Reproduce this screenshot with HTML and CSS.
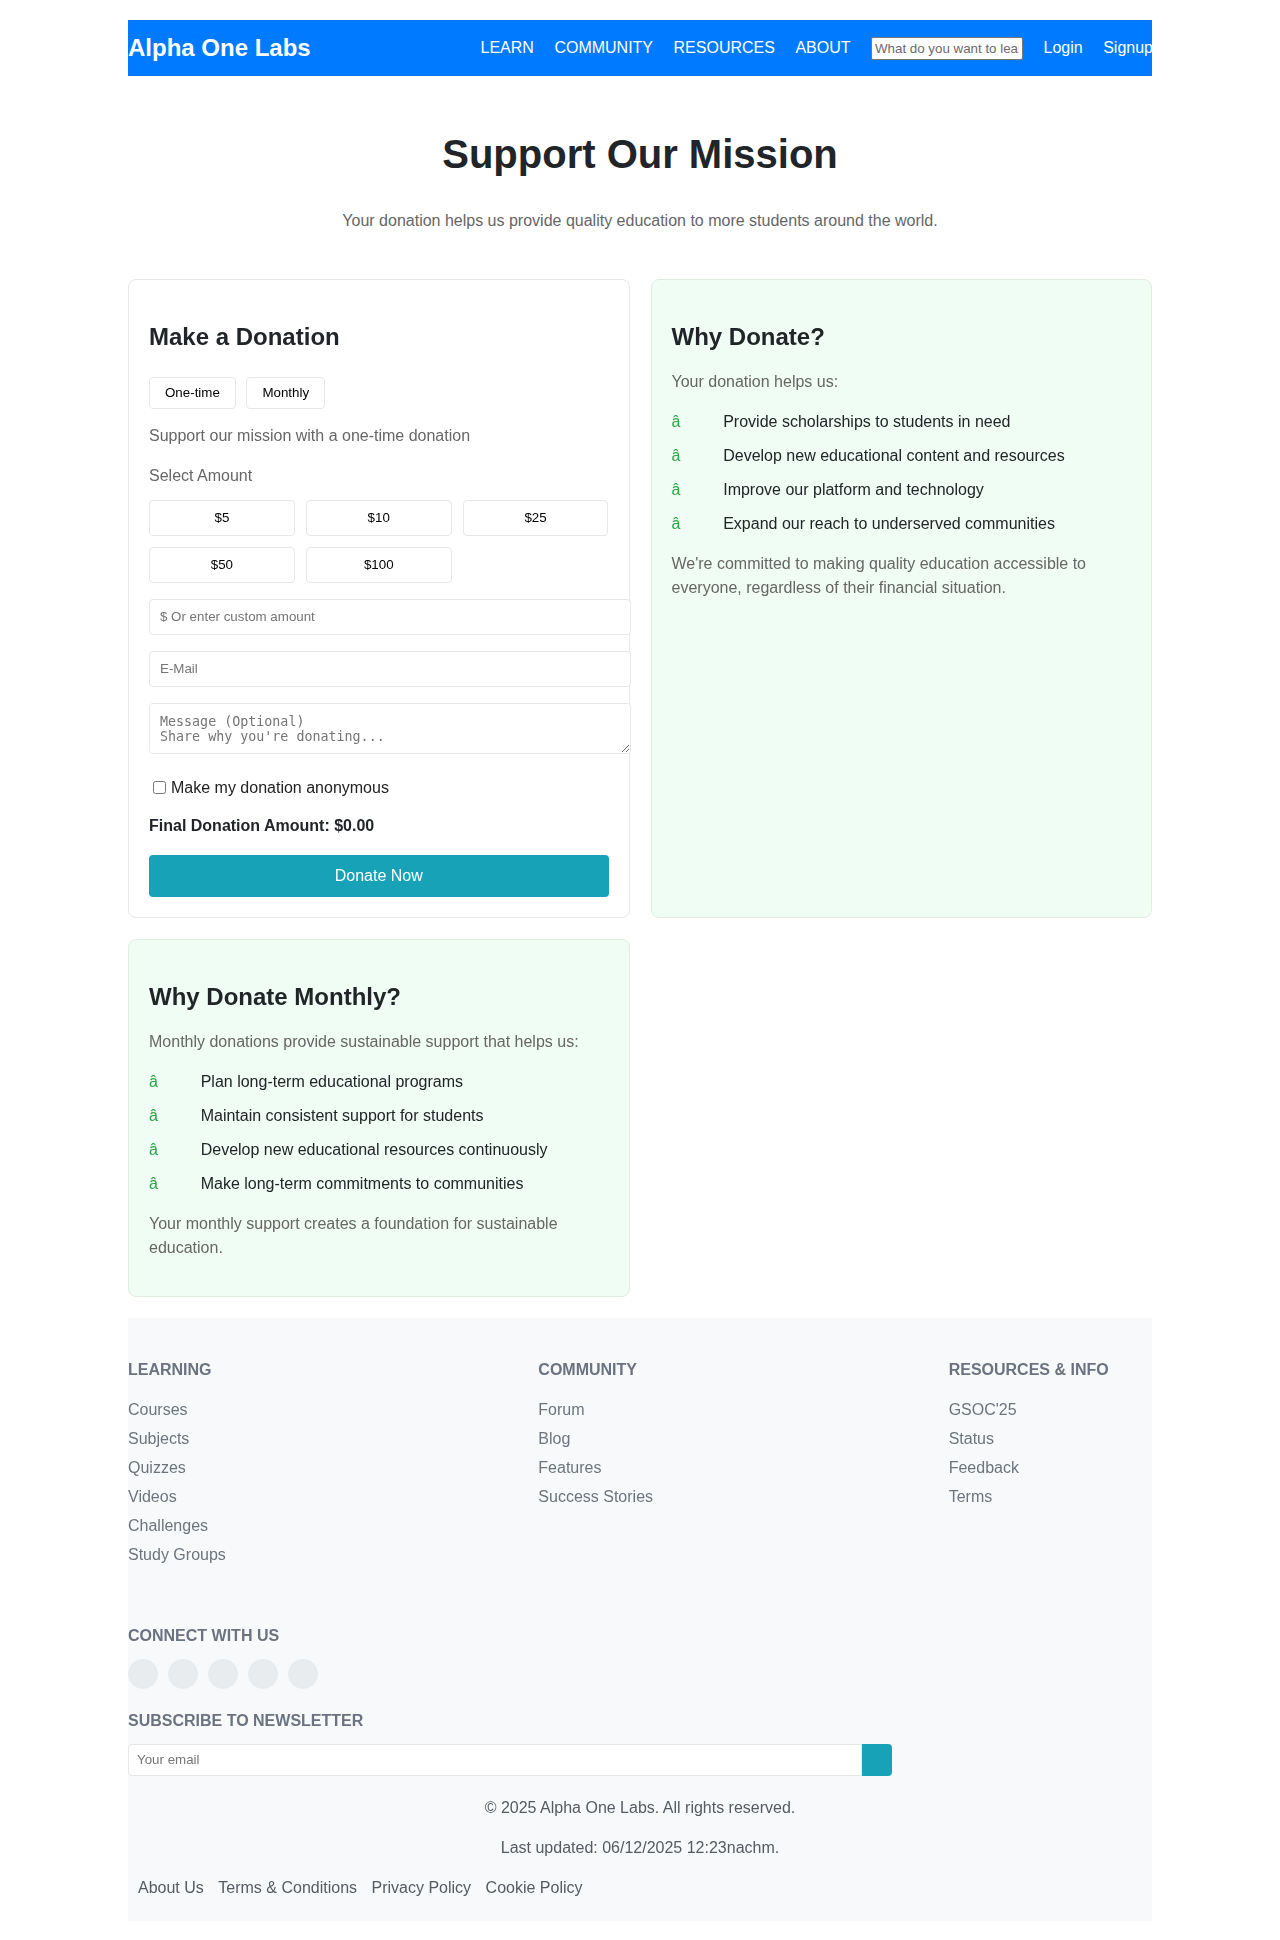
FILE: index.html
```html
<!DOCTYPE html>
<html lang="en">
<head>
<meta charset="utf-8">
<title>Support Our Mission - Alpha One Labs</title>
<link rel="stylesheet" href="styles.css">
</head>
<body>
<div class="page">
  <header class="topbar">
    <a class="brand" href="#">Alpha One Labs</a>
    <nav class="nav">
      <a href="#">LEARN</a>
      <a href="#">COMMUNITY</a>
      <a href="#">RESOURCES</a>
      <a href="#">ABOUT</a>
      <input class="search" type="text" placeholder="What do you want to learn?">
      <a href="#">Login</a>
      <a href="#">Signup</a>
    </nav>
  </header>

  <section class="hero">
    <h1>Support Our Mission</h1>
    <p>Your donation helps us provide quality education to more students around the world.</p>
  </section>

  <div class="cards">
    <div class="card">
      <h2>Make a Donation</h2>
      <div class="toggle">
        <button class="toggle-btn">One-time</button>
        <button class="toggle-btn">Monthly</button>
      </div>
      <p class="muted mission">Support our mission with a one-time donation</p>
      <label class="muted amount-label">Select Amount</label>
      <div class="amounts">
        <button class="amount">$5</button>
        <button class="amount">$10</button>
        <button class="amount">$25</button>
        <button class="amount">$50</button>
        <button class="amount">$100</button>
      </div>
      <input class="field" type="text" placeholder="$ Or enter custom amount">
      <input class="field" type="email" placeholder="E-Mail">
      <textarea class="field message" rows="2" placeholder="Message (Optional)&#10;Share why you're donating..."></textarea>
      <label class="anon"><input type="checkbox" class="anon-box">Make my donation anonymous</label>
      <p class="final">Final Donation Amount: $0.00</p>
      <button class="donate">Donate Now</button>
    </div>

    <div class="card card-green">
      <h2>Why Donate?</h2>
      <p class="muted">Your donation helps us:</p>
      <ul class="checks">
        <li><span class="check">â</span>Provide scholarships to students in need</li>
        <li><span class="check">â</span>Develop new educational content and resources</li>
        <li><span class="check">â</span>Improve our platform and technology</li>
        <li><span class="check">â</span>Expand our reach to underserved communities</li>
      </ul>
      <p class="muted">We're committed to making quality education accessible to everyone, regardless of their financial situation.</p>
    </div>

    <div class="card card-green">
      <h2>Why Donate Monthly?</h2>
      <p class="muted">Monthly donations provide sustainable support that helps us:</p>
      <ul class="checks">
        <li><span class="check">â</span>Plan long-term educational programs</li>
        <li><span class="check">â</span>Maintain consistent support for students</li>
        <li><span class="check">â</span>Develop new educational resources continuously</li>
        <li><span class="check">â</span>Make long-term commitments to communities</li>
      </ul>
      <p class="muted">Your monthly support creates a foundation for sustainable education.</p>
    </div>
  </div>

  <footer class="footer">
    <div class="footer-cols">
      <div>
        <h3 class="f-head">Learning</h3>
        <ul class="f-links">
          <li><a href="#">Courses</a></li>
          <li><a href="#">Subjects</a></li>
          <li><a href="#">Quizzes</a></li>
          <li><a href="#">Videos</a></li>
          <li><a href="#">Challenges</a></li>
          <li><a href="#">Study Groups</a></li>
        </ul>
      </div>
      <div>
        <h3 class="f-head">Community</h3>
        <ul class="f-links">
          <li><a href="#">Forum</a></li>
          <li><a href="#">Blog</a></li>
          <li><a href="#">Features</a></li>
          <li><a href="#">Success Stories</a></li>
        </ul>
      </div>
      <div>
        <h3 class="f-head">Resources &amp; Info</h3>
        <ul class="f-links">
          <li><a href="#">GSOC'25</a></li>
          <li><a href="#">Status</a></li>
          <li><a href="#">Feedback</a></li>
          <li><a href="#">Terms</a></li>
        </ul>
      </div>
    </div>

    <h3 class="f-head connect">Connect With Us</h3>
    <div class="socials">
      <a class="social" href="#"></a>
      <a class="social" href="#"></a>
      <a class="social" href="#"></a>
      <a class="social" href="#"></a>
      <a class="social" href="#"></a>
    </div>

    <h3 class="f-head subscribe">Subscribe to Newsletter</h3>
    <form class="newsletter">
      <input class="news-input" type="email" placeholder="Your email">
      <button class="news-btn" type="button"></button>
    </form>

    <p class="copy">© 2025 Alpha One Labs. All rights reserved.</p>
    <p class="updated">Last updated: 06/12/2025 12:23nachm.</p>
    <div class="legal">
      <a href="#">About Us</a>
      <a href="#">Terms &amp; Conditions</a>
      <a href="#">Privacy Policy</a>
      <a href="#">Cookie Policy</a>
    </div>
  </footer>
</div>
</body>
</html>
```

FILE: styles.css
```css
* {
  box-sizing: border-box;
}

body {
  margin: 0;
  background: #ffffff;
  font-family: "Liberation Sans", Arial, sans-serif;
  font-size: 16px;
  line-height: 24px;
  color: #212529;
}

a {
  text-decoration: none;
  color: inherit;
}

.page {
  width: 1024px;
  margin: 0 auto;
  padding: 20px 0 20px;
}

/* Header */
.topbar {
  height: 56px;
  background: #007bff;
  display: flex;
  align-items: center;
  justify-content: space-between;
}

.brand {
  color: #ffffff;
  font-size: 24px;
  font-weight: bold;
  line-height: 28px;
}

.nav {
  display: flex;
  align-items: center;
  gap: 20.5px;
  margin-right: -1px;
}

.nav a {
  color: #ffffff;
  font-size: 16px;
  line-height: 24px;
  white-space: nowrap;
}

.search {
  width: 152px;
  height: 23px;
  padding: 1px 3px;
  border: 1px solid #767676;
  border-radius: 2px;
  background: #ffffff;
  font-family: "Liberation Sans", Arial, sans-serif;
  font-size: 13.33px;
  color: #333;
}

.search::placeholder {
  color: #6b6b6b;
}

/* Hero */
.hero {
  text-align: center;
}

.hero h1 {
  margin: 54px 0 0;
  font-size: 40px;
  line-height: 48px;
  font-weight: bold;
  color: #212529;
}

.hero p {
  margin: 31.2px 0 0;
  color: #666666;
}

/* Cards */
.cards {
  margin-top: 46.1px;
  display: grid;
  grid-template-columns: 1fr 1fr;
  gap: 21px;
}

.card {
  border: 1px solid #e5e7eb;
  border-radius: 8px;
  padding: 20px;
  background: #ffffff;
}

.card-green {
  background: #f0fdf4;
  border-color: #dcefe1;
}

.card h2 {
  margin: 22px 0 18px;
  font-size: 24px;
  line-height: 30px;
  font-weight: bold;
  color: #212529;
}

.muted {
  color: #666666;
}

.card p {
  margin: 0 0 16px;
}

.toggle {
  display: flex;
  gap: 10.6px;
  padding-top: 6.4px;
}

.toggle-btn {
  height: 32px;
  padding: 0 15px;
  border: 1px solid #e5e7eb;
  border-radius: 4px;
  background: #ffffff;
  font-family: "Liberation Sans", Arial, sans-serif;
  font-size: 13.33px;
  color: #000000;
}

.card p.mission {
  margin: 15.2px 0 16px;
}

.amount-label {
  display: block;
  margin-bottom: 12px;
}

.amounts {
  display: grid;
  grid-template-columns: repeat(3, 1fr);
  gap: 11px;
}

.amount {
  height: 36px;
  border: 1px solid #e5e7eb;
  border-radius: 4px;
  background: #ffffff;
  font-family: "Liberation Sans", Arial, sans-serif;
  font-size: 13.33px;
  color: #000000;
}

.field {
  display: block;
  box-sizing: content-box;
  width: 100%;
  height: 34px;
  margin-top: 16px;
  padding: 0 10px;
  border: 1px solid #e5e7eb;
  border-radius: 4px;
  background: #ffffff;
  font-family: "Liberation Sans", Arial, sans-serif;
  font-size: 13.33px;
  color: #333;
}

.field::placeholder {
  color: #757575;
}

.message {
  height: 29.4px;
  padding: 10px;
  font-family: "DejaVu Sans Mono", monospace;
  font-size: 13.33px;
  line-height: 15.4px;
  resize: vertical;
}

.anon {
  display: flex;
  align-items: center;
  margin-top: 21.3px;
  color: #222222;
}

.anon-box {
  width: 13px;
  height: 13px;
  margin: 0 5px 0 4px;
}

.card p.final {
  margin: 14.3px 0 0;
  font-weight: bold;
  color: #212529;
}

.donate {
  display: block;
  width: 100%;
  height: 42px;
  margin-top: 16.7px;
  border: none;
  border-radius: 4px;
  background: #17a2b8;
  color: #ffffff;
  font-family: "Liberation Sans", Arial, sans-serif;
  font-size: 16px;
}

.checks {
  list-style: none;
  margin: 0 0 16px;
  padding: 0;
  display: flex;
  flex-direction: column;
  gap: 10px;
  color: #212529;
}

.checks li {
  display: flex;
}

.check {
  width: 51.7px;
  flex-shrink: 0;
  color: #28a745;
}

/* Footer */
.footer {
  margin-top: 21px;
  background: #f8f9fa;
  padding: 40px 0 20.5px;
}

.footer-cols {
  display: grid;
  grid-template-columns: repeat(3, 1fr);
  column-gap: 207px;
}

.f-head {
  margin: 0 0 16px;
  font-size: 16px;
  line-height: 24px;
  font-weight: bold;
  text-transform: uppercase;
  color: #6b7280;
}

.f-links {
  list-style: none;
  margin: 0;
  padding: 0;
  display: flex;
  flex-direction: column;
  gap: 5px;
  color: #6c757d;
}

.f-head.connect {
  margin: 57px 0 0;
}

.socials {
  display: flex;
  gap: 10px;
  margin-top: 11px;
}

.social {
  width: 30px;
  height: 30px;
  border-radius: 50%;
  background: #e9ecef;
}

.f-head.subscribe {
  margin: 20px 0 0;
}

.newsletter {
  display: flex;
  margin: 11px 0 0;
  width: 764px;
}

.news-input {
  width: 734px;
  height: 32.5px;
  padding: 0 8px;
  border: 1px solid #e5e7eb;
  border-radius: 4px 0 0 4px;
  background: #ffffff;
  font-family: "Liberation Sans", Arial, sans-serif;
  font-size: 13.33px;
}

.news-input::placeholder {
  color: #757575;
}

.news-btn {
  width: 30px;
  height: 32.5px;
  border: none;
  border-radius: 0 4px 4px 0;
  background: #17a2b8;
}

.copy {
  margin: 20px 0 0;
  text-align: center;
  color: #555b61;
}

.updated {
  margin: 16px 0 0;
  text-align: center;
  color: #555b61;
}

.legal {
  display: flex;
  gap: 14.5px;
  margin-top: 16px;
  padding-left: 10px;
  color: #555b61;
}
```
